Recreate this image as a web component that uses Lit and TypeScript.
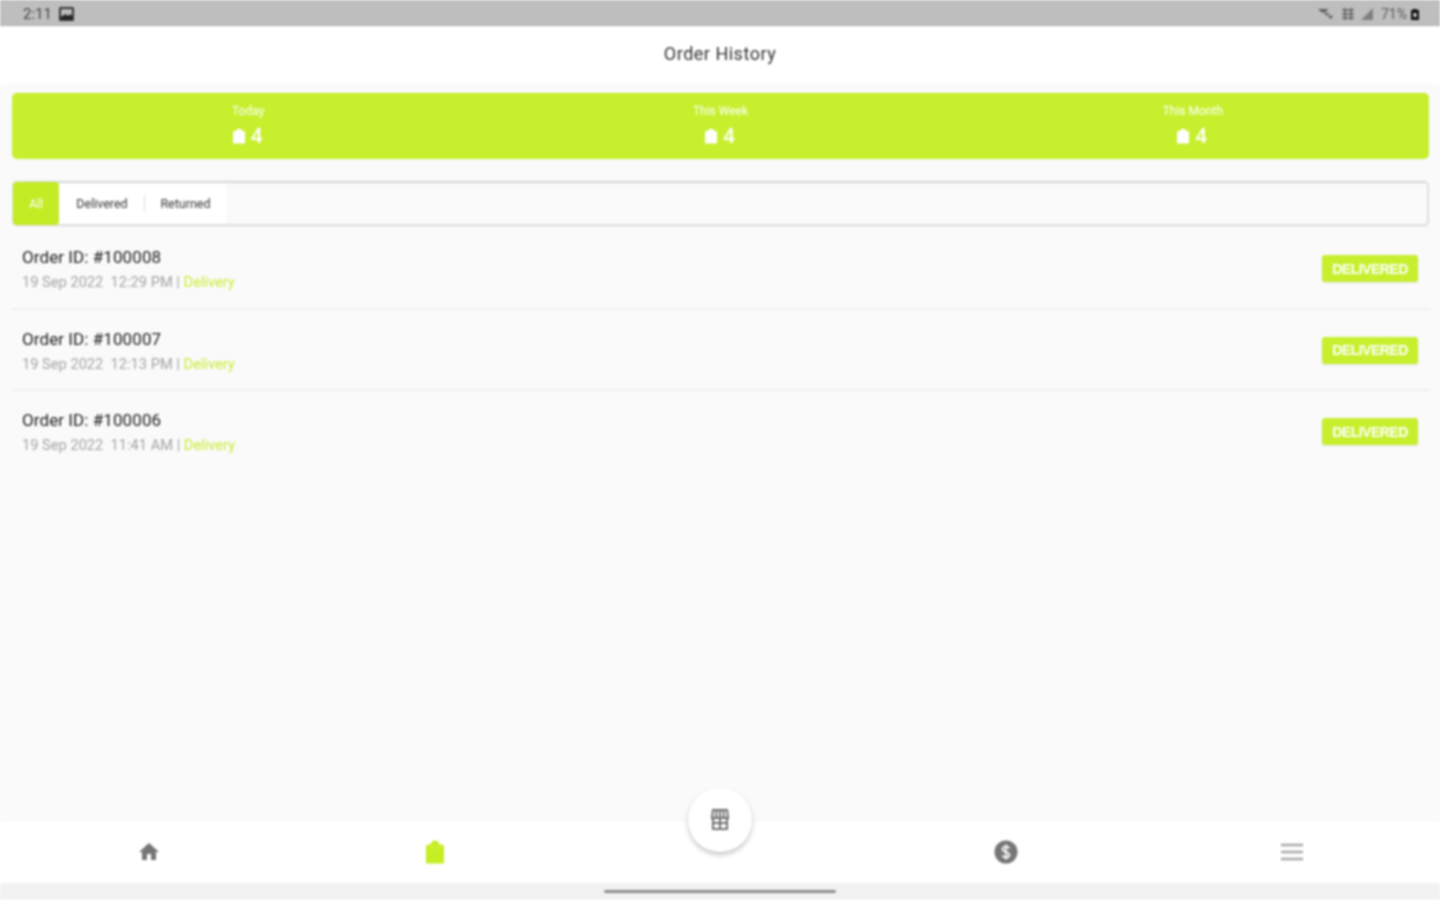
import { LitElement, html, css, svg } from "lit";
import { customElement } from "lit/decorators.js";

const bag = (c: string) => svg`<path fill="${c}" d="M2.500 5L3.800 3.800H6.200C6.800 1.800 8.300 .5 10 .5s3.200 1.300 3.800 3.300h2.400L17.500 5V19.500H2.500z"/><circle cx="7.500" cy="6.200" r=".7" fill="#fff" fill-opacity=".55"/><circle cx="12.500" cy="6.200" r=".7" fill="#fff" fill-opacity=".55"/>`;

const orders = [
  { id: "#100008", time: "19 Sep 2022  12:29 PM" },
  { id: "#100007", time: "19 Sep 2022  12:13 PM" },
  { id: "#100006", time: "19 Sep 2022  11:41 AM" },
];
const stats = ["Today", "This Week", "This Month"];

@customElement("app-root")
export class AppRoot extends LitElement {
  static styles = css`
    :host { display: block; width: 1440px; height: 900px; font-family: Roboto, "Liberation Sans", sans-serif; }
    .page { width: 1440px; height: 900px; background: #fafafa; display: flex; flex-direction: column; overflow: hidden; position: relative; filter: blur(0.8px); }
    .status { height: 26px; flex: none; background: #bebebe; border-bottom: 1px solid #adadad; box-sizing: border-box; display: flex; align-items: center; justify-content: space-between; padding: 3px 20px 0 23px; color: #444; font-size: 15px; }
    .status-l, .status-r { display: flex; align-items: center; gap: 7px; }
    .status-r { gap: 6px; font-size: 14px; color: #5c5c5c; }
    .status-r .pct { margin-left: 1px; margin-right: -3px; }
    .header { height: 58px; flex: none; background: #fff; display: flex; align-items: center; justify-content: center; font-size: 18px; letter-spacing: .5px; color: #333; padding-bottom: 4px; box-sizing: border-box; }
    .main { flex: 1; padding: 9px 11px 0 12px; display: flex; flex-direction: column; min-height: 0; }
    .stats { height: 66px; background: #c7ef2e; border-radius: 5px; display: grid; grid-template-columns: repeat(3, 1fr); color: #fff; flex: none; border-top: 1px solid #bdea14; box-sizing: border-box; }
    .stat { display: flex; flex-direction: column; align-items: center; padding-top: 10px; }
    .stat-label { font-size: 12px; line-height: 14px; color: #fff; }
    .stat-val { display: flex; align-items: center; gap: 4px; font-size: 21px; line-height: 24px; font-weight: 500; margin: 6px 3px 0 0; }
    .stat-val svg { width: 16px; height: 16px; }
    .tabs { margin-top: 22px; height: 45px; flex: none; box-sizing: border-box; border: 2px solid #dfdfdf; border-top-color: #d6d6d6; border-radius: 5px; background: #fafafa; display: flex; align-items: stretch; box-shadow: 0 1px 1px #eee; }
    .tab { display: flex; align-items: center; justify-content: center; font-size: 12.500px; color: #333; background: #fff; }
    .tab.active { width: 46px; background: #c3ec25; color: #fff; border-radius: 4px; margin: -1px 0 -1px -1px; }
    .tab.d { width: 86px; position: relative; }
    .tab.d::after { content: ""; position: absolute; right: 0; top: 12px; height: 17px; width: 1px; background: #ddd; }
    .tab.r { width: 81px; }
    .list { margin-top: 2px; display: flex; flex-direction: column; margin-right: -1px; }
    .row { height: 81.500px; box-sizing: border-box; border-bottom: 2px solid #f0f0f0; display: flex; align-items: flex-start; justify-content: space-between; padding: 19px 12px 0 10px; }
    .row:last-child { border-bottom: 0; }
    .oid { font-size: 17px; line-height: 20px; color: #1c1c1c; letter-spacing: .08px; }
    .meta { font-size: 14.650px; line-height: 18px; margin-top: 6px; color: #a4a4a4; white-space: pre; }
    .meta span { color: #c8ee3a; }
    .badge { margin-top: 8px; width: 96px; height: 27px; background: #c7ef2e; border-radius: 3px; color: #fff; font-family: "Liberation Sans", sans-serif; font-size: 14px; font-weight: 700; display: flex; align-items: center; justify-content: center; box-shadow: 0 1px 2px #e4e4e4; letter-spacing: -.5px; }
    .nav { height: 61px; flex: none; background: #fff; display: grid; grid-template-columns: repeat(5, 285.750px); padding-left: 6px; position: relative; }
    .nav-item { display: flex; align-items: center; justify-content: center; padding-bottom: 2px; }
    .nav-item svg { width: 24px; height: 24px; }
    .fab { position: absolute; left: 688px; top: -34px; width: 64px; height: 64px; border-radius: 50%; background: #fff; box-shadow: 0 3px 5px rgba(0,0,0,.22); display: flex; align-items: center; justify-content: center; }
    .fab svg { width: 24px; height: 24px; }
    .gesture { height: 17px; flex: none; background: #f2f2f2; display: flex; justify-content: center; padding-top: 7px; box-sizing: border-box; }
    .gesture div { width: 232px; height: 3px; background: #8d8d8d; border-radius: 2px; }
  `;

  render() {
    return html`<div class="page">
      <div class="status">
        <div class="status-l"><span>2:11</span>
          <svg width="15" height="14" viewBox="0 0 15 14"><rect x="0" y="0" width="15" height="14" rx="1.500" fill="#333"/><rect x="2" y="2" width="11" height="7" fill="#bbb"/><path d="M2 11l4-4 3 2 2-2 2 2v3H2z" fill="#222"/></svg>
        </div>
        <div class="status-r">
          <svg width="17" height="14" viewBox="0 0 20 14"><path d="M0 1h12l-3 4H4zM6 6h8l-3 3zM11 9h7l-3 4z" fill="#5c5c5c"/></svg>
          <svg width="14" height="14" viewBox="0 0 14 14"><path d="M1 3h12M1 7h12M1 11h12M4 1v12M10 1v12" stroke="#666" stroke-width="1.600" fill="none"/></svg>
          <svg width="13" height="14" viewBox="0 0 13 14"><path d="M0 13L12 1v12z" fill="#808080"/></svg>
          <span class="pct">71%</span>
          <svg width="10" height="14" viewBox="0 0 10 14"><path d="M3 2h4v1h2v10H1V3h2z" fill="#111"/><rect x="3.500" y="6" width="3" height="4" fill="#ddd"/></svg>
        </div>
      </div>
      <div class="header">Order History</div>
      <div class="main">
        <div class="stats">
          ${stats.map((s) => html`<div class="stat"><div class="stat-label">${s}</div>
            <div class="stat-val"><svg viewBox="0 0 20 20">${bag("#fff")}</svg>4</div></div>`)}
        </div>
        <div class="tabs">
          <div class="tab active">All</div>
          <div class="tab d">Delivered</div>
          <div class="tab r">Returned</div>
        </div>
        <div class="list">
          ${orders.map((o) => html`<div class="row">
            <div><div class="oid">Order ID: ${o.id}</div><div class="meta">${o.time} | <span>Delivery</span></div></div>
            <div class="badge">DELIVERED</div>
          </div>`)}
        </div>
      </div>
      <div class="nav">
        <div class="nav-item"><svg viewBox="0 0 24 24"><path fill="#757575" d="M10 20v-6h4v6h5v-8h3L12 3 2 12h3v8z"/></svg></div>
        <div class="nav-item"><svg viewBox="0 0 20 20">${bag("#c6ee23")}</svg></div>
        <div class="nav-item"></div>
        <div class="nav-item"><svg viewBox="0 0 24 24"><circle cx="12" cy="12" r="11.500" fill="#757575"/><path d="M15.500 8.500c-.6-1.300-2-2-3.500-2-2 0-3.500 1-3.500 2.700 0 3.600 7 1.900 7 5.500 0 1.700-1.500 2.800-3.500 2.800-1.600 0-3-.8-3.600-2.200M12 4.500v15" stroke="#fff" stroke-width="1.700" fill="none"/></svg></div>
        <div class="nav-item"><svg viewBox="0 0 24 24"><path d="M1 5h22M1 12h22M1 19h22" stroke="#a8a8a8" stroke-width="2.400"/></svg></div>
        <div class="fab"><svg viewBox="0 0 24 24" fill="none" stroke="#707070" stroke-width="2"><path d="M5 2h14l1 8H4zM12 2v20M8.500 2L8 10M15.500 2l.5 8M5 10v11h14V10M5 15h14"/></svg></div>
      </div>
      <div class="gesture"><div></div></div>
    </div>`;
  }
}
